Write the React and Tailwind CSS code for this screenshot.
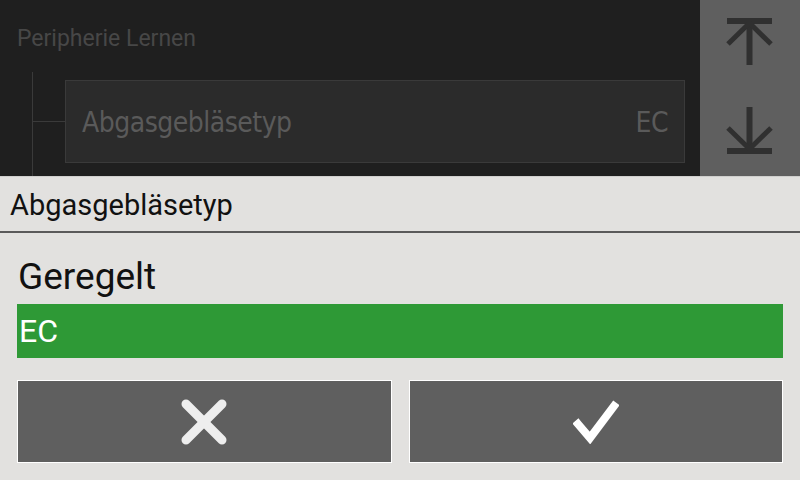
import React from "react";

const ArrowTop = () => (
  <svg width="50" height="52" viewBox="0 0 50 52" fill="none" stroke="#303030" strokeWidth="6">
    <line x1="2" y1="5" x2="47" y2="5" />
    <line x1="24.5" y1="5" x2="24.5" y2="49" />
    <line x1="3" y1="28" x2="24.5" y2="7" strokeWidth="5" />
    <line x1="46" y1="28" x2="24.5" y2="7" strokeWidth="5" />
  </svg>
);

const ArrowBottom = () => (
  <svg width="50" height="52" viewBox="0 0 50 52" fill="none" stroke="#303030" strokeWidth="6">
    <line x1="2" y1="46" x2="47" y2="46" />
    <line x1="24.5" y1="2" x2="24.5" y2="46" />
    <line x1="3" y1="23" x2="24.5" y2="44" strokeWidth="5" />
    <line x1="46" y1="23" x2="24.5" y2="44" strokeWidth="5" />
  </svg>
);

const CrossIcon = () => (
  <svg width="46" height="46" viewBox="0 0 46 46" fill="none" stroke="#eeeeee" strokeWidth="9" strokeLinecap="round">
    <line x1="5" y1="5" x2="41" y2="41" />
    <line x1="41" y1="5" x2="5" y2="41" />
  </svg>
);

const CheckIcon = () => (
  <svg width="46" height="44" viewBox="0 0 46 44" fill="none" stroke="#ffffff" strokeWidth="8" strokeLinecap="square">
    <polyline points="5,24 17,38 41,6" />
  </svg>
);

export default function App() {
  return (
    <div className="w-[800px] h-[480px] overflow-hidden flex flex-col font-['Roboto',sans-serif]">
      <div className="h-[176px] flex">
        <div className="flex-1 bg-[#1f1f1f] flex flex-col">
          <div className="h-[72px] pl-[17px] pt-[25px] text-[23px] leading-[28px] text-[#474747]">
            Peripherie Lernen
          </div>
          <div className="flex-1 ml-[32px] border-l border-[#3a3a3a]">
            <div className="mt-[8px] flex items-center">
              <div className="w-[32px] h-px bg-[#3a3a3a]" />
              <div className="w-[620px] h-[83px] bg-[#2b2b2b] border border-[#3a3a3a] flex items-center justify-between pl-[16px] pr-[16px] pt-[2px] text-[#5a5a5a] text-[28px] tracking-[-0.5px] font-['DejaVu_Sans_Condensed','Roboto',sans-serif]">
                <span>Abgasgebläsetyp</span>
                <span>EC</span>
              </div>
            </div>
          </div>
        </div>
        <div className="w-[100px] bg-[#5f5f5f] flex flex-col">
          <div className="h-[88px] flex items-start justify-center pt-[16px]">
            <ArrowTop />
          </div>
          <div className="h-[88px] flex items-start justify-center pt-[17px]">
            <ArrowBottom />
          </div>
        </div>
      </div>
      <div className="flex-1 bg-[#e2e1df] border-t border-[#cfcfcd] flex flex-col">
        <div className="h-[56px] border-b-2 border-[#5a5a5a] flex items-center pl-[10px] pt-[3px] text-[29px] text-[#111111]">
          Abgasgebläsetyp
        </div>
        <div className="h-[71px] flex items-end pl-[18px] pb-[2px] text-[37px] leading-[50px] text-[#111111]">
          Geregelt
        </div>
        <div className="mx-[17px] h-[54px] bg-[#2e9936] flex items-center pl-[2px] text-[32px] text-white">
          EC
        </div>
        <div className="mx-[17px] mt-[22px] grid grid-cols-2 gap-[17px]">
          <button type="button" className="h-[83px] bg-[#5f5f5f] border border-white flex items-center justify-center">
            <CrossIcon />
          </button>
          <button type="button" className="h-[83px] bg-[#5f5f5f] border border-white flex items-center justify-center">
            <CheckIcon />
          </button>
        </div>
      </div>
    </div>
  );
}
